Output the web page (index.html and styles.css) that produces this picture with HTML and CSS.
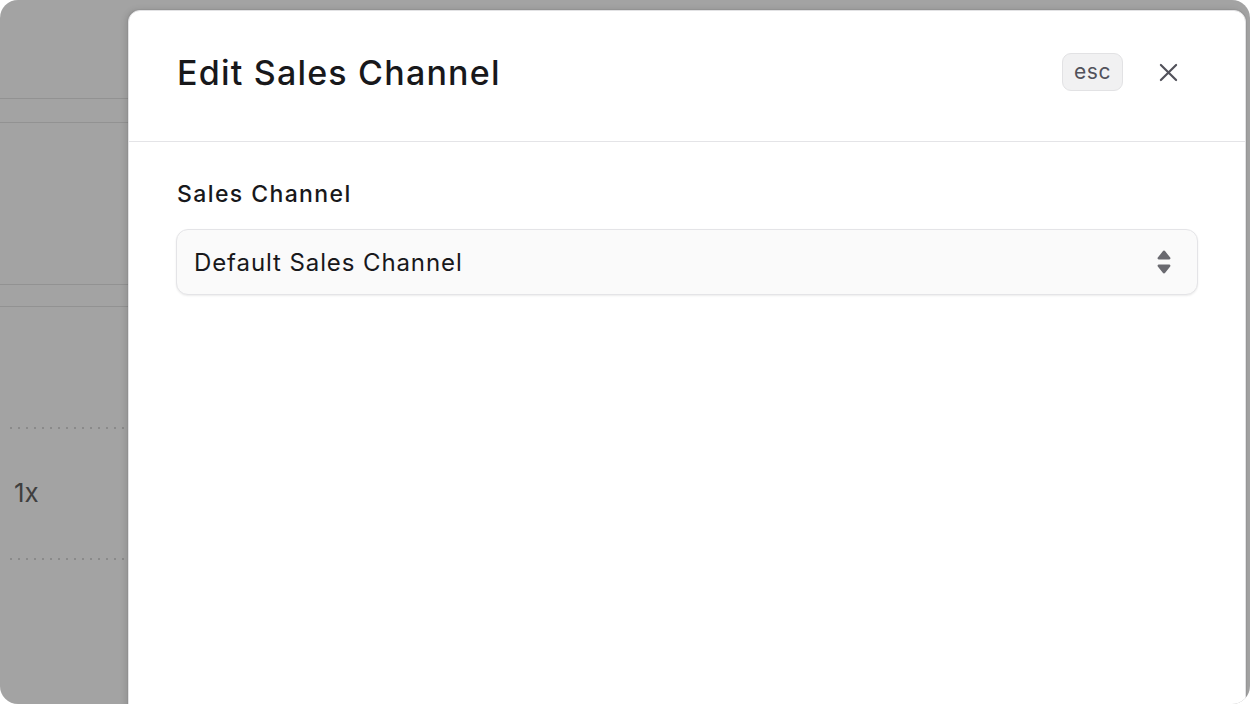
FILE: index.html
```html
<!DOCTYPE html>
<html lang="en">
<head>
<meta charset="utf-8">
<title>Edit Sales Channel</title>
<link rel="stylesheet" href="styles.css">
</head>
<body>
<div class="frame">
  <div class="backdrop">
    <div class="bg-rows">
      <div class="bg-line l1"></div>
      <div class="bg-line l2"></div>
      <div class="bg-line l3"></div>
      <div class="bg-line l4"></div>
      <div class="bg-dots d1"></div>
      <div class="bg-text">1x</div>
      <div class="bg-dots d2"></div>
    </div>
  </div>
  <div class="modal">
    <header class="modal-header">
      <h1 class="modal-title">Edit Sales Channel</h1>
      <div class="header-actions">
        <kbd class="kbd">esc</kbd>
        <button class="close-btn" type="button" aria-label="Close">
          <svg width="19" height="19" viewBox="0 0 20 20" fill="none" stroke="currentColor" stroke-width="2.3" stroke-linecap="round"><path d="M2 2L18 18M18 2L2 18"/></svg>
        </button>
      </div>
    </header>
    <div class="modal-body">
      <label class="field-label">Sales Channel</label>
      <div class="select">
        <span class="select-value">Default Sales Channel</span>
        <svg class="select-icon" width="16" height="26" viewBox="0 0 16 26" fill="currentColor"><path d="M8 1.5C8.5 1.5 8.9 1.8 9.2 2.2L14.2 8.6C14.8 9.4 14.3 10.5 13.3 10.5H2.7C1.7 10.5 1.2 9.4 1.8 8.6L6.8 2.2C7.1 1.8 7.5 1.5 8 1.5Z"/><path d="M8 24.5C7.5 24.5 7.1 24.2 6.8 23.8L1.8 17.4C1.2 16.6 1.7 15.5 2.7 15.5H13.3C14.3 15.5 14.8 16.6 14.2 17.4L9.2 23.8C8.9 24.2 8.5 24.5 8 24.5Z"/></svg>
      </div>
    </div>
  </div>
</div>
</body>
</html>
```

FILE: styles.css
```css
* { box-sizing: border-box; }
html, body { margin: 0; padding: 0; background: #ffffff; }
body {
  width: 1252px;
  height: 704px;
  overflow: hidden;
  font-family: "Inter", "Noto Sans", sans-serif;
}
.frame {
  position: relative;
  width: 1250px;
  height: 704px;
  border-radius: 18px;
  overflow: hidden;
  background: #a3a3a3;
}
.backdrop {
  width: 128px;
  height: 100%;
}
.bg-rows {
  display: flex;
  flex-direction: column;
  padding-top: 98px;
}
.bg-line {
  height: 1px;
  background: #929292;
}
.l2 { margin-top: 23px; }
.l3 { margin-top: 161px; }
.l4 { margin-top: 21px; }
.bg-dots {
  height: 2px;
  margin-left: 7px;
  margin-right: 3px;
  background-image: radial-gradient(circle, #8a8a8a 0.8px, transparent 1px);
  background-size: 8px 2px;
}
.d1 { margin-top: 120px; }
.bg-text {
  margin-top: 44px;
  margin-left: 14px;
  font-size: 26px;
  line-height: 40px;
  color: #3f3f3f;
  height: 85px;
}
.modal {
  position: absolute;
  left: 128px;
  top: 10px;
  width: 1118px;
  height: 720px;
  background: #ffffff;
  border: 1px solid #e2e2e4;
  border-radius: 12px;
  box-shadow: 0 0 0 1px rgba(0,0,0,0.04), -2px 0 6px rgba(0,0,0,0.12);
}
.modal-header {
  display: flex;
  align-items: center;
  justify-content: space-between;
  height: 131px;
  padding: 0 67px 8px 48px;
  border-bottom: 1px solid #e4e4e7;
}
.modal-title {
  margin: 0;
  font-size: 34px;
  font-weight: 500;
  color: #18181b;
  letter-spacing: 1.2px;
}
.header-actions {
  display: flex;
  align-items: center;
  gap: 36px;
}
.kbd {
  display: inline-flex;
  align-items: center;
  justify-content: center;
  width: 61px;
  height: 38px;
  border: 1px solid #e2e2e4;
  border-radius: 9px;
  background: #f1f1f2;
  font-family: "Inter", "Noto Sans", sans-serif;
  font-size: 21px;
  letter-spacing: 0.5px;
  color: #52525b;
  padding-bottom: 2px;
}
.close-btn {
  display: flex;
  align-items: center;
  justify-content: center;
  width: 19px;
  height: 19px;
  padding: 0;
  border: 0;
  background: none;
  color: #52525b;
}
.modal-body {
  display: flex;
  flex-direction: column;
  padding: 36px 47px 0 47px;
}
.field-label {
  font-size: 23px;
  font-weight: 500;
  line-height: 32px;
  color: #18181b;
  letter-spacing: 1.4px;
  margin-bottom: 19px;
  padding-left: 1px;
}
.select {
  display: flex;
  align-items: center;
  justify-content: space-between;
  height: 66px;
  padding: 0 25px 0 17px;
  background: #fafafa;
  border: 1px solid #e4e4e7;
  border-radius: 12px;
  box-shadow: 0 1px 2px rgba(0,0,0,0.08);
}
.select-value {
  font-size: 24px;
  letter-spacing: 0.9px;
  color: #18181b;
}
.select-icon {
  color: #6a6a70;
}
```
